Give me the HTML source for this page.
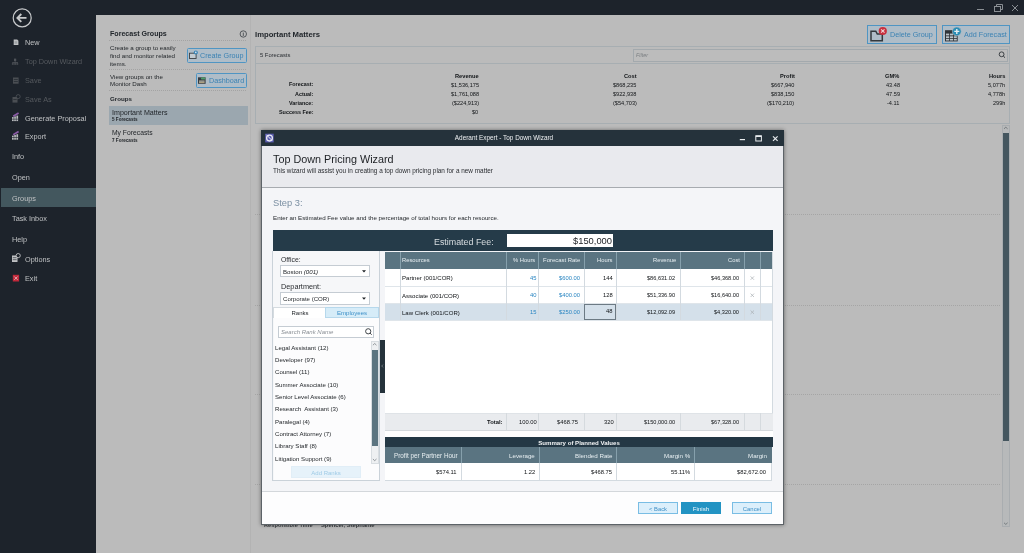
<!DOCTYPE html><html><head><meta charset="utf-8"><style>
html,body{margin:0;padding:0;width:1024px;height:553px;overflow:hidden;background:#bbbbbb;font-family:"Liberation Sans",sans-serif;}
.a{position:absolute;box-sizing:border-box;}
.t{position:absolute;white-space:nowrap;will-change:transform;}
svg{position:absolute;overflow:visible}
</style></head><body>
<div class="a" style="left:0px;top:0px;width:1024px;height:15px;background:#1d232b"></div>
<div class="a" style="left:0px;top:0px;width:96px;height:553px;background:#1d232b"></div>
<div class="a" style="left:96px;top:15px;width:928px;height:538px;background:#bbbbbb"></div>
<svg style="left:0;top:0" width="1024" height="15"><g stroke="#8a8f94" stroke-width="1" fill="none"><line x1="977" y1="9.5" x2="984" y2="9.5"/><rect x="994.5" y="6.5" width="6" height="5"/><path d="M996.5 6.5 V4.5 H1002.5 V9.5 H1000.5"/><path d="M1012 5 L1018 11 M1018 5 L1012 11"/></g></svg>
<svg style="left:0;top:0" width="96" height="40"><circle cx="22.2" cy="17.9" r="9" stroke="#c8cacc" stroke-width="1.2" fill="none"/><path d="M17.8 17.9 H26.5 M21.3 14 L17.4 17.9 L21.3 21.8" stroke="#c8cacc" stroke-width="1.9" fill="none"/></svg>
<div class="t" style="left:25px;top:39.03px;font-size:7.3px;line-height:7.3px;color:#bfc1c3;">New</div>
<div class="t" style="left:25px;top:58.33px;font-size:7.3px;line-height:7.3px;color:#55595e;">Top Down Wizard</div>
<div class="t" style="left:25px;top:77.33px;font-size:7.3px;line-height:7.3px;color:#55595e;">Save</div>
<div class="t" style="left:25px;top:96.03px;font-size:7.3px;line-height:7.3px;color:#55595e;">Save As</div>
<div class="t" style="left:25px;top:114.73px;font-size:7.3px;line-height:7.3px;color:#bfc1c3;">Generate Proposal</div>
<div class="t" style="left:25px;top:133.23px;font-size:7.3px;line-height:7.3px;color:#bfc1c3;">Export</div>
<div class="a" style="left:1px;top:187.7px;width:95px;height:19.5px;background:#43575e"></div>
<div class="t" style="left:12px;top:152.73px;font-size:7.3px;line-height:7.3px;color:#bfc1c3;">Info</div>
<div class="t" style="left:12px;top:173.83px;font-size:7.3px;line-height:7.3px;color:#bfc1c3;">Open</div>
<div class="t" style="left:12px;top:194.83px;font-size:7.3px;line-height:7.3px;color:#bfc1c3;">Groups</div>
<div class="t" style="left:12px;top:215.33px;font-size:7.3px;line-height:7.3px;color:#bfc1c3;">Task Inbox</div>
<div class="t" style="left:12px;top:235.73px;font-size:7.3px;line-height:7.3px;color:#bfc1c3;">Help</div>
<div class="t" style="left:25px;top:255.73px;font-size:7.3px;line-height:7.3px;color:#bfc1c3;">Options</div>
<div class="t" style="left:25px;top:274.73px;font-size:7.3px;line-height:7.3px;color:#bfc1c3;">Exit</div>
<svg style="left:0;top:0" width="96" height="300"><path d="M13.7 39.6 H17.2 L18.4 40.8 V45 H13.7 Z" fill="#bfc1c3"/><rect x="14.6" y="41.2" width="2.6" height="2.6" fill="#9ea3a6"/><g fill="#50545a"><rect x="14" y="58.6" width="2.2" height="2.4"/><rect x="14.7" y="60.8" width="0.8" height="2"/><rect x="12.2" y="62.2" width="5.8" height="0.8"/><rect x="11.9" y="63.2" width="1.8" height="1.5"/><rect x="14.2" y="63.2" width="1.8" height="1.5"/><rect x="16.4" y="63.2" width="1.8" height="1.5"/></g><g fill="#4a4e53"><rect x="13" y="77.5" width="5.6" height="6.2"/></g><g fill="#1d232b"><rect x="13.8" y="79.2" width="4" height="0.6"/><rect x="13.8" y="81.2" width="4" height="0.6"/></g><g fill="#4a4e53"><rect x="12.5" y="97" width="5" height="5.6"/></g><circle cx="18.2" cy="96.6" r="2" fill="#1d232b" stroke="#4a4e53" stroke-width="0.9"/><rect x="13.3" y="99" width="3.4" height="0.6" fill="#1d232b"/><g fill="#b9bbbe"><rect x="12" y="117.1" width="1.7" height="4"/><rect x="14.2" y="116.39999999999999" width="1.7" height="4.7"/><rect x="16.4" y="115.6" width="1.7" height="5.5"/><rect x="12" y="118.8" width="6.1" height="0.6" fill="#1d232b"/></g><path d="M13.2 116.19999999999999 L18.6 113.0" stroke="#8c5ca8" stroke-width="1.7"/><g fill="#b9bbbe"><rect x="12" y="135.7" width="1.7" height="4"/><rect x="14.2" y="135.0" width="1.7" height="4.7"/><rect x="16.4" y="134.2" width="1.7" height="5.5"/><rect x="12" y="137.39999999999998" width="6.1" height="0.6" fill="#1d232b"/></g><path d="M13.2 134.79999999999998 L18.6 131.6" stroke="#8c5ca8" stroke-width="1.7"/><rect x="12" y="255.5" width="5.5" height="6.5" fill="#bfc1c3"/><g fill="#1d232b"><rect x="12.8" y="257.5" width="3.8" height="0.6"/><rect x="12.8" y="259.5" width="3.8" height="0.6"/></g><circle cx="18.2" cy="255.6" r="2.1" fill="#1d232b" stroke="#bfc1c3" stroke-width="0.9"/><rect x="12.8" y="274.8" width="6.3" height="6.7" fill="#c0283a"/><path d="M14.3 276.5 l3.3 3.3 m0 -3.3 l-3.3 3.3" stroke="#e8c8cc" stroke-width="0.8"/></svg>
<div class="t" style="left:110px;top:31.44px;font-size:7.1px;line-height:7.1px;color:#22272c;font-weight:700;">Forecast Groups</div>
<svg style="left:0;top:0" width="260" height="110"><circle cx="243.3" cy="34" r="3.2" fill="none" stroke="#3a3f44" stroke-width="0.8"/><line x1="243.3" y1="32.6" x2="243.3" y2="36" stroke="#3a3f44" stroke-width="0.8"/></svg>
<div class="a" style="left:109px;top:40px;width:138px;height:1px;background-image:linear-gradient(90deg,#a3a3a3 50%,transparent 50%);background-size:2px 1px;"></div>
<div class="a" style="left:109px;top:69px;width:138px;height:1px;background-image:linear-gradient(90deg,#a3a3a3 50%,transparent 50%);background-size:2px 1px;"></div>
<div class="a" style="left:109px;top:90px;width:138px;height:1px;background-image:linear-gradient(90deg,#a3a3a3 50%,transparent 50%);background-size:2px 1px;"></div>
<div class="t" style="left:110px;top:45.11px;font-size:6.2px;line-height:6.2px;color:#1e2226;">Create a group to easily</div>
<div class="t" style="left:110px;top:52.91px;font-size:6.2px;line-height:6.2px;color:#1e2226;">find and monitor related</div>
<div class="t" style="left:110px;top:60.51px;font-size:6.2px;line-height:6.2px;color:#1e2226;">items.</div>
<div class="t" style="left:110px;top:73.61px;font-size:6.2px;line-height:6.2px;color:#1e2226;">View groups on the</div>
<div class="t" style="left:110px;top:81.31px;font-size:6.2px;line-height:6.2px;color:#1e2226;">Monitor Dash</div>
<div class="a" style="left:187px;top:48px;width:60px;height:14.5px;background:#afbdc8;border:1px solid #4f95c3;border-radius:1.5px"></div>
<div class="t" style="left:200px;top:52.28px;font-size:7.2px;line-height:7.2px;color:#3b82b3;">Create Group</div>
<svg style="left:0;top:0" width="260" height="110"><rect x="189.5" y="53.2" width="6.6" height="5.3" fill="#c3ccd2" stroke="#3b4045" stroke-width="0.9"/><circle cx="195.8" cy="52.5" r="2.1" fill="#3d86b6"/><circle cx="195.8" cy="52.4" r="0.8" fill="#dfe8ee"/></svg>
<div class="a" style="left:195.5px;top:73px;width:51.5px;height:14.7px;background:#afbdc8;border:1px solid #4f95c3;border-radius:1.5px"></div>
<div class="t" style="left:208.5px;top:77.38px;font-size:7.2px;line-height:7.2px;color:#3b82b3;">Dashboard</div>
<svg style="left:0;top:0" width="260" height="110"><rect x="198" y="77.3" width="7.6" height="6.5" fill="#363b40"/><rect x="199" y="80.6" width="5.6" height="1" fill="#d8d3bf"/><rect x="199" y="82.2" width="5.6" height="0.9" fill="#c9b98f"/><ellipse cx="203.2" cy="78.4" rx="2.4" ry="1.2" fill="#4f9a6a"/></svg>
<div class="t" style="left:109.5px;top:96.31px;font-size:6.2px;line-height:6.2px;color:#22272c;font-weight:700;">Groups</div>
<div class="a" style="left:109.3px;top:105.6px;width:138.6px;height:19.6px;background:#9ba7af"></div>
<div class="t" style="left:111.6px;top:110.44px;font-size:7.1px;line-height:7.1px;color:#1e2226;">Important Matters</div>
<div class="t" style="left:111.6px;top:118.46px;font-size:4.6px;line-height:4.6px;color:#1e2226;font-weight:700;">5 Forecasts</div>
<div class="t" style="left:111.6px;top:130.42px;font-size:6.75px;line-height:6.75px;color:#1e2226;">My Forecasts</div>
<div class="t" style="left:111.6px;top:138.86px;font-size:4.6px;line-height:4.6px;color:#1e2226;font-weight:700;">7 Forecasts</div>
<div class="a" style="left:250px;top:15px;width:1px;height:538px;background:#b3b3b3"></div>
<div class="t" style="left:255px;top:30.62px;font-size:7.7px;line-height:7.7px;color:#22272c;font-weight:700;">Important Matters</div>
<div class="a" style="left:867px;top:25.2px;width:70px;height:18.8px;background:#afbdc8;border:1px solid #4f95c3"></div>
<div class="t" style="left:890px;top:31.28px;font-size:7.2px;line-height:7.2px;color:#3b82b3;">Delete Group</div>
<svg style="left:0;top:0" width="1024" height="50"><path d="M871 31.2 V40.7 H882.3 V34 H877.3 L875.8 31.2 Z" fill="none" stroke="#33383d" stroke-width="1.5"/><circle cx="882.8" cy="31" r="4.1" fill="#c8313f"/><path d="M881.1 29.3 l3.4 3.4 m0 -3.4 l-3.4 3.4" stroke="#f0d5d8" stroke-width="1.1"/></svg>
<div class="a" style="left:942px;top:25.2px;width:67.8px;height:18.8px;background:#afbdc8;border:1px solid #4f95c3"></div>
<div class="t" style="left:964.3px;top:31.28px;font-size:7.2px;line-height:7.2px;color:#3b82b3;">Add Forecast</div>
<svg style="left:0;top:0" width="1024" height="50"><rect x="945" y="30.2" width="12.7" height="11.2" fill="#2f3439"/><g fill="#b9c2c8"><rect x="946" y="33.6" width="3.2" height="1.8"/><rect x="950" y="33.6" width="3.2" height="1.8"/><rect x="954" y="33.6" width="2.8" height="1.8"/><rect x="946" y="36.3" width="3.2" height="1.8"/><rect x="950" y="36.3" width="3.2" height="1.8"/><rect x="954" y="36.3" width="2.8" height="1.8"/><rect x="946" y="38.9" width="3.2" height="1.6"/><rect x="950" y="38.9" width="3.2" height="1.6"/><rect x="954" y="38.9" width="2.8" height="1.6"/></g><circle cx="956.8" cy="31.4" r="4.4" fill="#2a8db5" stroke="#b1bec7" stroke-width="0.6"/><path d="M956.8 28.9 v5 M954.3 31.4 h5" stroke="#e6eef2" stroke-width="1.4"/></svg>
<div class="a" style="left:255.2px;top:46px;width:754.6px;height:78px;border:1px solid #a7aeb2"></div>
<div class="a" style="left:255.2px;top:63px;width:754.6px;height:1px;background:#a7aeb2"></div>
<div class="t" style="left:259.6px;top:52.83px;font-size:5.8px;line-height:5.8px;color:#2a2e33;">5 Forecasts</div>
<div class="a" style="left:632.6px;top:49.4px;width:375.4px;height:12.2px;border:1px solid #a3a9ad;background:#bcbcbc"></div>
<div class="t" style="left:636px;top:53.14px;font-size:5.4px;line-height:5.4px;color:#7b7f82;font-style:italic;">Filter</div>
<svg style="left:0;top:0" width="1024" height="70"><circle cx="1001.6" cy="54.3" r="2.4" fill="none" stroke="#2f3439" stroke-width="0.9"/><line x1="1003.3" y1="56" x2="1005" y2="57.7" stroke="#2f3439" stroke-width="1"/></svg>
<div class="t" style="right:711px;text-align:right;top:82.24px;font-size:5.4px;line-height:5.4px;color:#111417;font-weight:700;">Forecast:</div>
<div class="t" style="right:711px;text-align:right;top:91.54px;font-size:5.4px;line-height:5.4px;color:#111417;font-weight:700;">Actual:</div>
<div class="t" style="right:711px;text-align:right;top:100.54px;font-size:5.4px;line-height:5.4px;color:#111417;font-weight:700;">Variance:</div>
<div class="t" style="right:711px;text-align:right;top:109.54px;font-size:5.4px;line-height:5.4px;color:#111417;font-weight:700;">Success Fee:</div>
<div class="t" style="right:545.3px;text-align:right;top:73.78px;font-size:5.7px;line-height:5.7px;color:#111417;font-weight:700;">Revenue</div>
<div class="t" style="right:545.3px;text-align:right;top:82.63px;font-size:5.6px;line-height:5.6px;color:#111417;">$1,536,175</div>
<div class="t" style="right:545.3px;text-align:right;top:91.83px;font-size:5.6px;line-height:5.6px;color:#111417;">$1,761,088</div>
<div class="t" style="right:545.3px;text-align:right;top:100.63px;font-size:5.6px;line-height:5.6px;color:#111417;">($224,913)</div>
<div class="t" style="right:545.3px;text-align:right;top:109.63px;font-size:5.6px;line-height:5.6px;color:#111417;">$0</div>
<div class="t" style="right:387.5px;text-align:right;top:73.78px;font-size:5.7px;line-height:5.7px;color:#111417;font-weight:700;">Cost</div>
<div class="t" style="right:387.5px;text-align:right;top:82.63px;font-size:5.6px;line-height:5.6px;color:#111417;">$868,235</div>
<div class="t" style="right:387.5px;text-align:right;top:91.83px;font-size:5.6px;line-height:5.6px;color:#111417;">$922,938</div>
<div class="t" style="right:387.5px;text-align:right;top:100.63px;font-size:5.6px;line-height:5.6px;color:#111417;">($54,703)</div>
<div class="t" style="right:229.6px;text-align:right;top:73.78px;font-size:5.7px;line-height:5.7px;color:#111417;font-weight:700;">Profit</div>
<div class="t" style="right:229.6px;text-align:right;top:82.63px;font-size:5.6px;line-height:5.6px;color:#111417;">$667,940</div>
<div class="t" style="right:229.6px;text-align:right;top:91.83px;font-size:5.6px;line-height:5.6px;color:#111417;">$838,150</div>
<div class="t" style="right:229.6px;text-align:right;top:100.63px;font-size:5.6px;line-height:5.6px;color:#111417;">($170,210)</div>
<div class="t" style="right:124.3px;text-align:right;top:73.78px;font-size:5.7px;line-height:5.7px;color:#111417;font-weight:700;">GM%</div>
<div class="t" style="right:124.3px;text-align:right;top:82.63px;font-size:5.6px;line-height:5.6px;color:#111417;">43.48</div>
<div class="t" style="right:124.3px;text-align:right;top:91.83px;font-size:5.6px;line-height:5.6px;color:#111417;">47.59</div>
<div class="t" style="right:124.3px;text-align:right;top:100.63px;font-size:5.6px;line-height:5.6px;color:#111417;">-4.11</div>
<div class="t" style="right:19px;text-align:right;top:73.78px;font-size:5.7px;line-height:5.7px;color:#111417;font-weight:700;">Hours</div>
<div class="t" style="right:19px;text-align:right;top:82.63px;font-size:5.6px;line-height:5.6px;color:#111417;">5,077h</div>
<div class="t" style="right:19px;text-align:right;top:91.83px;font-size:5.6px;line-height:5.6px;color:#111417;">4,778h</div>
<div class="t" style="right:19px;text-align:right;top:100.63px;font-size:5.6px;line-height:5.6px;color:#111417;">299h</div>
<div class="a" style="left:255px;top:214.2px;width:746px;height:1.0px;background-image:linear-gradient(90deg,#a5a5a5 50%,transparent 50%);background-size:2px 1px;"></div>
<div class="a" style="left:255px;top:304.8px;width:746px;height:1.0px;background-image:linear-gradient(90deg,#a5a5a5 50%,transparent 50%);background-size:2px 1px;"></div>
<div class="a" style="left:255px;top:394.2px;width:746px;height:1.0px;background-image:linear-gradient(90deg,#a5a5a5 50%,transparent 50%);background-size:2px 1px;"></div>
<div class="a" style="left:255px;top:484.2px;width:746px;height:1.0px;background-image:linear-gradient(90deg,#a5a5a5 50%,transparent 50%);background-size:2px 1px;"></div>
<div class="a" style="left:1002px;top:125px;width:7.5px;height:402px;background:#b7b9ba;border:1px solid #a9adb0"></div>
<div class="a" style="left:1003.2px;top:133px;width:5.4px;height:308px;background:#44565f"></div>
<svg style="left:0;top:0" width="1024" height="553"><path d="M1004 128.8 l1.8 -1.6 l1.8 1.6 M1004 522.8 l1.8 1.6 l1.8 -1.6" stroke="#5a6166" stroke-width="0.7" fill="none"/></svg>
<div class="t" style="left:263.9px;top:523.18px;font-size:5.7px;line-height:5.7px;color:#3a3e42;font-weight:700;">Responsible Time</div>
<div class="t" style="left:321px;top:523.13px;font-size:5.8px;line-height:5.8px;color:#3a3e42;font-weight:700;">Spencer, Stephanie</div>
<div class="a" style="left:261px;top:130px;width:522.5px;height:394.8px;background:#f4f5f8;border:1px solid #5d6368;box-shadow:0 0 4px rgba(0,0,0,0.45)"></div>
<div class="a" style="left:261px;top:130px;width:522.5px;height:15.5px;background:#25323b"></div>
<svg style="left:0;top:0" width="1024" height="160"><rect x="265.2" y="133.7" width="8.5" height="8.7" fill="#5a5db0"/><circle cx="269.5" cy="138.1" r="2.9" fill="none" stroke="#e8e8f4" stroke-width="1.3"/><path d="M266.5 134.8 L272 140.5" stroke="#e8e8f4" stroke-width="1"/><line x1="739.8" y1="139.6" x2="745" y2="139.6" stroke="#e9ecef" stroke-width="1.2"/><rect x="755.8" y="135.8" width="5.6" height="5.2" fill="none" stroke="#e9ecef" stroke-width="1"/><line x1="755.8" y1="136.3" x2="761.4" y2="136.3" stroke="#e9ecef" stroke-width="1.4"/><path d="M773 136.3 L777.6 140.9 M777.6 136.3 L773 140.9" stroke="#e9ecef" stroke-width="1.2"/></svg>
<div class="t" style="left:204px;width:600px;text-align:center;top:135.41px;font-size:6.4px;line-height:6.4px;color:#eef0f2;">Aderant Expert - Top Down Wizard</div>
<div class="a" style="left:262px;top:145.5px;width:520.5px;height:41.5px;background:#e9eaee"></div>
<div class="a" style="left:262px;top:186.6px;width:520.5px;height:1.0px;background:#a7abb0"></div>
<div class="t" style="left:272.7px;top:154.48px;font-size:10.8px;line-height:10.8px;color:#1c1f23;">Top Down Pricing Wizard</div>
<div class="t" style="left:272.7px;top:168.21px;font-size:6.4px;line-height:6.4px;color:#2a2d31;">This wizard will assist you in creating a top down pricing plan for a new matter</div>
<div class="t" style="left:273.4px;top:199.07px;font-size:9.3px;line-height:9.3px;color:#7a8fa2;">Step 3:</div>
<div class="t" style="left:273px;top:215.31px;font-size:6.2px;line-height:6.2px;color:#24282c;">Enter an Estimated Fee value and the percentage of total hours for each resource.</div>
<div class="a" style="left:262px;top:491px;width:520.5px;height:32.8px;background:#fdfdfe"></div>
<div class="a" style="left:262px;top:490.6px;width:520.5px;height:1.0px;background:#d3d7db"></div>
<div class="a" style="left:272.8px;top:230.1px;width:500.0px;height:21.1px;background:#253b49"></div>
<div class="t" style="right:530.8px;text-align:right;top:237.78px;font-size:8.9px;line-height:8.9px;color:#d8dde0;">Estimated Fee:</div>
<div class="a" style="left:506.5px;top:233.8px;width:106.9px;height:13.7px;background:#ffffff"></div>
<div class="t" style="right:412.5px;text-align:right;top:236.54px;font-size:9.35px;line-height:9.35px;color:#1c1f23;">$150,000</div>
<div class="a" style="left:272px;top:251px;width:108px;height:229.8px;background:#f6f7f9;border:1px solid #cad2d9;border-top:none"></div>
<div class="t" style="left:280.7px;top:256.77px;font-size:6.85px;line-height:6.85px;color:#2a2d31;">Office:</div>
<div class="a" style="left:280.3px;top:265.4px;width:89.3px;height:11.8px;background:#fff;border:1px solid #c5ccd3"></div>
<div class="t" style="left:282.7px;top:268.94px;font-size:6.15px;line-height:6.15px;color:#1e2226;">Boston <i>(001)</i></div>
<div class="t" style="left:280.7px;top:282.93px;font-size:7.3px;line-height:7.3px;color:#2a2d31;">Department:</div>
<div class="a" style="left:280.3px;top:292.4px;width:89.3px;height:12.3px;background:#fff;border:1px solid #c5ccd3"></div>
<div class="t" style="left:282.7px;top:296.18px;font-size:6.07px;line-height:6.07px;color:#1e2226;">Corporate (COR)</div>
<svg style="left:0;top:0" width="1024" height="320"><path d="M362 270.2 h4 l-2 2.4z M362 297.4 h4 l-2 2.4z" fill="#1e2226"/></svg>
<div class="a" style="left:273.3px;top:307px;width:52.1px;height:11px;background:#ffffff;border-top:1px solid #d5dbe0;border-left:1px solid #d5dbe0"></div>
<div class="a" style="left:325.4px;top:307px;width:53.6px;height:11px;background:#d6ecf8;border:1px solid #b6d8ec"></div>
<div class="t" style="left:-0.5px;width:600px;text-align:center;top:310.32px;font-size:6px;line-height:6px;color:#24282c;">Ranks</div>
<div class="t" style="left:52.2px;width:600px;text-align:center;top:310.27px;font-size:6.1px;line-height:6.1px;color:#3e90c8;">Employees</div>
<div class="a" style="left:273.6px;top:318px;width:105.4px;height:162px;background:#fcfcfd"></div>
<div class="a" style="left:278.4px;top:325.9px;width:95.2px;height:11.7px;background:#fff;border:1px solid #c5ccd3"></div>
<div class="t" style="left:281.3px;top:329.32px;font-size:6px;line-height:6px;color:#8b9096;font-style:italic;">Search Rank Name</div>
<svg style="left:0;top:0" width="1024" height="553"><circle cx="368.2" cy="331.3" r="2.6" fill="none" stroke="#2e3338" stroke-width="0.9"/><line x1="370" y1="333.1" x2="371.6" y2="334.7" stroke="#2e3338" stroke-width="1"/></svg>
<div class="t" style="left:275.4px;top:344.87px;font-size:6.1px;line-height:6.1px;color:#1e2226;">Legal Assistant (12)</div>
<div class="t" style="left:275.4px;top:357.17px;font-size:6.1px;line-height:6.1px;color:#1e2226;">Developer (97)</div>
<div class="t" style="left:275.4px;top:369.47px;font-size:6.1px;line-height:6.1px;color:#1e2226;">Counsel (11)</div>
<div class="t" style="left:275.4px;top:381.77px;font-size:6.1px;line-height:6.1px;color:#1e2226;">Summer Associate (10)</div>
<div class="t" style="left:275.4px;top:394.07px;font-size:6.1px;line-height:6.1px;color:#1e2226;">Senior Level Associate (6)</div>
<div class="t" style="left:275.4px;top:406.37px;font-size:6.1px;line-height:6.1px;color:#1e2226;">Research&nbsp; Assistant (3)</div>
<div class="t" style="left:275.4px;top:418.67px;font-size:6.1px;line-height:6.1px;color:#1e2226;">Paralegal (4)</div>
<div class="t" style="left:275.4px;top:430.97px;font-size:6.1px;line-height:6.1px;color:#1e2226;">Contract Attorney (7)</div>
<div class="t" style="left:275.4px;top:443.27px;font-size:6.1px;line-height:6.1px;color:#1e2226;">Library Staff (8)</div>
<div class="t" style="left:275.4px;top:455.57px;font-size:6.1px;line-height:6.1px;color:#1e2226;">Litigation Support (9)</div>
<div class="a" style="left:370.8px;top:340.9px;width:7.8px;height:123.4px;background:#eef0f2;border:1px solid #d8dde1"></div>
<div class="a" style="left:371.8px;top:350.4px;width:5.8px;height:95.5px;background:#5b7480"></div>
<svg style="left:0;top:0" width="1024" height="553"><path d="M372.9 345.2 l1.8 -1.7 l1.8 1.7 M372.9 459 l1.8 1.7 l1.8 -1.7" stroke="#6a7075" stroke-width="0.7" fill="none"/></svg>
<div class="a" style="left:291.3px;top:465.9px;width:69.4px;height:12.5px;background:#e6f2fa;border:1px solid #e1eef7"></div>
<div class="t" style="left:26px;width:600px;text-align:center;top:469.62px;font-size:6px;line-height:6px;color:#9fcbe6;">Add Ranks</div>
<div class="a" style="left:380px;top:339.6px;width:4.5px;height:53.4px;background:#25323b"></div>
<svg style="left:0;top:0" width="1024" height="553"><path d="M383 364.6 l-1.3 1.4 l1.3 1.4" stroke="#9aa2a8" stroke-width="0.6" fill="none"/></svg>
<div class="a" style="left:384.5px;top:251.5px;width:388.0px;height:161.5px;background:#ffffff"></div>
<div class="a" style="left:384.5px;top:251.5px;width:388.0px;height:17.5px;background:#5a7481"></div>
<div class="a" style="left:384.5px;top:303.4px;width:388.0px;height:17.0px;background:#d4e0ea"></div>
<div class="a" style="left:384.5px;top:286.1px;width:388.0px;height:1.0px;background:#dfe5ea"></div>
<div class="a" style="left:384.5px;top:302.9px;width:388.0px;height:1.0px;background:#dfe5ea"></div>
<div class="a" style="left:384.5px;top:319.9px;width:388.0px;height:1.0px;background:#dfe5ea"></div>
<div class="a" style="left:399.8px;top:251.5px;width:1.0px;height:17.5px;background:#86a0ac"></div>
<div class="a" style="left:399.8px;top:269px;width:1.0px;height:51.4px;background:#d3dae0"></div>
<div class="a" style="left:506.2px;top:251.5px;width:1.0px;height:17.5px;background:#86a0ac"></div>
<div class="a" style="left:506.2px;top:269px;width:1.0px;height:51.4px;background:#d3dae0"></div>
<div class="a" style="left:537.8px;top:251.5px;width:1.0px;height:17.5px;background:#86a0ac"></div>
<div class="a" style="left:537.8px;top:269px;width:1.0px;height:51.4px;background:#d3dae0"></div>
<div class="a" style="left:583.8px;top:251.5px;width:1.0px;height:17.5px;background:#86a0ac"></div>
<div class="a" style="left:583.8px;top:269px;width:1.0px;height:51.4px;background:#d3dae0"></div>
<div class="a" style="left:615.9px;top:251.5px;width:1.0px;height:17.5px;background:#86a0ac"></div>
<div class="a" style="left:615.9px;top:269px;width:1.0px;height:51.4px;background:#d3dae0"></div>
<div class="a" style="left:680.2px;top:251.5px;width:1.0px;height:17.5px;background:#86a0ac"></div>
<div class="a" style="left:680.2px;top:269px;width:1.0px;height:51.4px;background:#d3dae0"></div>
<div class="a" style="left:744.0px;top:251.5px;width:1.0px;height:17.5px;background:#86a0ac"></div>
<div class="a" style="left:744.0px;top:269px;width:1.0px;height:51.4px;background:#d3dae0"></div>
<div class="a" style="left:759.7px;top:251.5px;width:1.0px;height:17.5px;background:#86a0ac"></div>
<div class="a" style="left:759.7px;top:269px;width:1.0px;height:51.4px;background:#d3dae0"></div>
<div class="a" style="left:772.0px;top:251.5px;width:1.0px;height:161.5px;background:#d3dae0"></div>
<div class="t" style="left:402px;top:257.73px;font-size:5.8px;line-height:5.8px;color:#e7eef1;">Resources</div>
<div class="t" style="right:489px;text-align:right;top:257.73px;font-size:5.8px;line-height:5.8px;color:#e7eef1;">% Hours</div>
<div class="t" style="right:444px;text-align:right;top:257.65px;font-size:5.95px;line-height:5.95px;color:#e7eef1;">Forecast Rate</div>
<div class="t" style="right:412px;text-align:right;top:257.73px;font-size:5.8px;line-height:5.8px;color:#e7eef1;">Hours</div>
<div class="t" style="right:348px;text-align:right;top:257.73px;font-size:5.8px;line-height:5.8px;color:#e7eef1;">Revenue</div>
<div class="t" style="right:284px;text-align:right;top:257.73px;font-size:5.8px;line-height:5.8px;color:#e7eef1;">Cost</div>
<div class="t" style="left:402px;top:275.49px;font-size:6.05px;line-height:6.05px;color:#101316;">Partner (001/COR)</div>
<div class="t" style="right:487.2px;text-align:right;top:275.63px;font-size:5.8px;line-height:5.8px;color:#2a86c2;">45</div>
<div class="t" style="right:444px;text-align:right;top:275.63px;font-size:5.8px;line-height:5.8px;color:#2a86c2;">$600.00</div>
<div class="t" style="right:411.2px;text-align:right;top:275.63px;font-size:5.8px;line-height:5.8px;color:#101316;">144</div>
<div class="t" style="right:349.5px;text-align:right;top:275.73px;font-size:5.6px;line-height:5.6px;color:#101316;">$86,631.02</div>
<div class="t" style="right:284.8px;text-align:right;top:275.73px;font-size:5.6px;line-height:5.6px;color:#101316;">$46,368.00</div>
<svg style="left:0;top:0" width="1024" height="553"><path d="M750.6 276.40000000000003 l3.4 3.4 m0 -3.4 l-3.4 3.4" stroke="#a7adb2" stroke-width="0.7"/></svg>
<div class="t" style="left:402px;top:292.69px;font-size:6.05px;line-height:6.05px;color:#101316;">Associate (001/COR)</div>
<div class="t" style="right:487.2px;text-align:right;top:292.83px;font-size:5.8px;line-height:5.8px;color:#2a86c2;">40</div>
<div class="t" style="right:444px;text-align:right;top:292.83px;font-size:5.8px;line-height:5.8px;color:#2a86c2;">$400.00</div>
<div class="t" style="right:411.2px;text-align:right;top:292.83px;font-size:5.8px;line-height:5.8px;color:#101316;">128</div>
<div class="t" style="right:349.5px;text-align:right;top:292.93px;font-size:5.6px;line-height:5.6px;color:#101316;">$51,336.90</div>
<div class="t" style="right:284.8px;text-align:right;top:292.93px;font-size:5.6px;line-height:5.6px;color:#101316;">$16,640.00</div>
<svg style="left:0;top:0" width="1024" height="553"><path d="M750.6 293.6 l3.4 3.4 m0 -3.4 l-3.4 3.4" stroke="#a7adb2" stroke-width="0.7"/></svg>
<div class="t" style="left:402px;top:309.59px;font-size:6.05px;line-height:6.05px;color:#101316;">Law Clerk (001/COR)</div>
<div class="t" style="right:487.2px;text-align:right;top:309.73px;font-size:5.8px;line-height:5.8px;color:#2a86c2;">15</div>
<div class="t" style="right:444px;text-align:right;top:309.73px;font-size:5.8px;line-height:5.8px;color:#2a86c2;">$250.00</div>
<div class="t" style="right:411.2px;text-align:right;top:309.73px;font-size:5.8px;line-height:5.8px;color:#101316;">48</div>
<div class="t" style="right:349.5px;text-align:right;top:309.83px;font-size:5.6px;line-height:5.6px;color:#101316;">$12,092.09</div>
<div class="t" style="right:284.8px;text-align:right;top:309.83px;font-size:5.6px;line-height:5.6px;color:#101316;">$4,320.00</div>
<svg style="left:0;top:0" width="1024" height="553"><path d="M750.6 310.5 l3.4 3.4 m0 -3.4 l-3.4 3.4" stroke="#a7adb2" stroke-width="0.7"/></svg>
<div class="a" style="left:584.3px;top:303.6px;width:32.1px;height:16.4px;border:1px solid #6c7a84;background:#d4e0ea"></div>
<div class="t" style="right:411.2px;text-align:right;top:309.43px;font-size:5.8px;line-height:5.8px;color:#101316;">48</div>
<div class="a" style="left:384.5px;top:413px;width:388.0px;height:18px;background:#e9ebee;border-top:1px solid #dfe3e7;border-bottom:1px solid #d5dade"></div>
<div class="a" style="left:506.2px;top:413px;width:1.0px;height:18px;background:#d5dade"></div>
<div class="a" style="left:537.8px;top:413px;width:1.0px;height:18px;background:#d5dade"></div>
<div class="a" style="left:583.8px;top:413px;width:1.0px;height:18px;background:#d5dade"></div>
<div class="a" style="left:615.9px;top:413px;width:1.0px;height:18px;background:#d5dade"></div>
<div class="a" style="left:680.2px;top:413px;width:1.0px;height:18px;background:#d5dade"></div>
<div class="a" style="left:744.0px;top:413px;width:1.0px;height:18px;background:#d5dade"></div>
<div class="a" style="left:759.7px;top:413px;width:1.0px;height:18px;background:#d5dade"></div>
<div class="t" style="right:521.4px;text-align:right;top:419.8px;font-size:5.85px;line-height:5.85px;color:#101316;font-weight:700;">Total:</div>
<div class="t" style="right:487.6px;text-align:right;top:419.83px;font-size:5.8px;line-height:5.8px;color:#101316;">100.00</div>
<div class="t" style="right:445.8px;text-align:right;top:419.83px;font-size:5.8px;line-height:5.8px;color:#101316;">$468.75</div>
<div class="t" style="right:410.5px;text-align:right;top:419.83px;font-size:5.8px;line-height:5.8px;color:#101316;">320</div>
<div class="t" style="right:349px;text-align:right;top:419.93px;font-size:5.6px;line-height:5.6px;color:#101316;">$150,000.00</div>
<div class="t" style="right:285.3px;text-align:right;top:419.93px;font-size:5.6px;line-height:5.6px;color:#101316;">$67,328.00</div>
<div class="a" style="left:384.5px;top:431px;width:388.0px;height:6.1px;background:#ffffff"></div>
<div class="a" style="left:384.5px;top:437.1px;width:388.0px;height:10.1px;background:#243845"></div>
<div class="t" style="left:278.6px;width:600px;text-align:center;top:439.57px;font-size:6.1px;line-height:6.1px;color:#f2f4f5;font-weight:700;">Summary of Planned Values</div>
<div class="a" style="left:384.5px;top:447.2px;width:387.0px;height:16.2px;background:#5a7481"></div>
<div class="a" style="left:384.5px;top:463.4px;width:387.0px;height:17.2px;background:#ffffff;border-bottom:1px solid #d3dae0;border-right:1px solid #d3dae0"></div>
<div class="a" style="left:460.9px;top:447.2px;width:1.0px;height:16.2px;background:#86a0ac"></div>
<div class="a" style="left:460.9px;top:463.4px;width:1.0px;height:17.2px;background:#d3dae0"></div>
<div class="a" style="left:538.6px;top:447.2px;width:1.0px;height:16.2px;background:#86a0ac"></div>
<div class="a" style="left:538.6px;top:463.4px;width:1.0px;height:17.2px;background:#d3dae0"></div>
<div class="a" style="left:616.3px;top:447.2px;width:1.0px;height:16.2px;background:#86a0ac"></div>
<div class="a" style="left:616.3px;top:463.4px;width:1.0px;height:17.2px;background:#d3dae0"></div>
<div class="a" style="left:694.2px;top:447.2px;width:1.0px;height:16.2px;background:#86a0ac"></div>
<div class="a" style="left:694.2px;top:463.4px;width:1.0px;height:17.2px;background:#d3dae0"></div>
<div class="t" style="right:566.7px;text-align:right;top:452.64px;font-size:6.34px;line-height:6.34px;color:#e7eef1;">Profit per Partner Hour</div>
<div class="t" style="right:567.1px;text-align:right;top:469.73px;font-size:5.8px;line-height:5.8px;color:#101316;">$574.11</div>
<div class="t" style="right:489px;text-align:right;top:452.71px;font-size:6.2px;line-height:6.2px;color:#e7eef1;">Leverage</div>
<div class="t" style="right:488.7px;text-align:right;top:469.73px;font-size:5.8px;line-height:5.8px;color:#101316;">1.22</div>
<div class="t" style="right:411.3px;text-align:right;top:452.71px;font-size:6.2px;line-height:6.2px;color:#e7eef1;">Blended Rate</div>
<div class="t" style="right:412.5px;text-align:right;top:469.73px;font-size:5.8px;line-height:5.8px;color:#101316;">$468.75</div>
<div class="t" style="right:333.4px;text-align:right;top:452.71px;font-size:6.2px;line-height:6.2px;color:#e7eef1;">Margin %</div>
<div class="t" style="right:333.4px;text-align:right;top:469.73px;font-size:5.8px;line-height:5.8px;color:#101316;">55.11%</div>
<div class="t" style="right:256.9px;text-align:right;top:452.71px;font-size:6.2px;line-height:6.2px;color:#e7eef1;">Margin</div>
<div class="t" style="right:258px;text-align:right;top:469.73px;font-size:5.8px;line-height:5.8px;color:#101316;">$82,672.00</div>
<div class="a" style="left:637.9px;top:501.9px;width:39.7px;height:12.6px;background:#dceffb;border:1px solid #79bde4"></div>
<div class="t" style="left:357.8px;width:600px;text-align:center;top:506.83px;font-size:5.8px;line-height:5.8px;color:#3d8fc6;">&lt; Back</div>
<div class="a" style="left:681px;top:501.9px;width:39.6px;height:12.6px;background:#2293c3"></div>
<div class="t" style="left:400.8px;width:600px;text-align:center;top:505.64px;font-size:6.15px;line-height:6.15px;color:#eef7fb;">Finish</div>
<div class="a" style="left:732px;top:501.9px;width:40px;height:12.6px;background:#dceffb;border:1px solid #79bde4"></div>
<div class="t" style="left:452px;width:600px;text-align:center;top:506.77px;font-size:5.9px;line-height:5.9px;color:#3d8fc6;">Cancel</div>
</body></html>
